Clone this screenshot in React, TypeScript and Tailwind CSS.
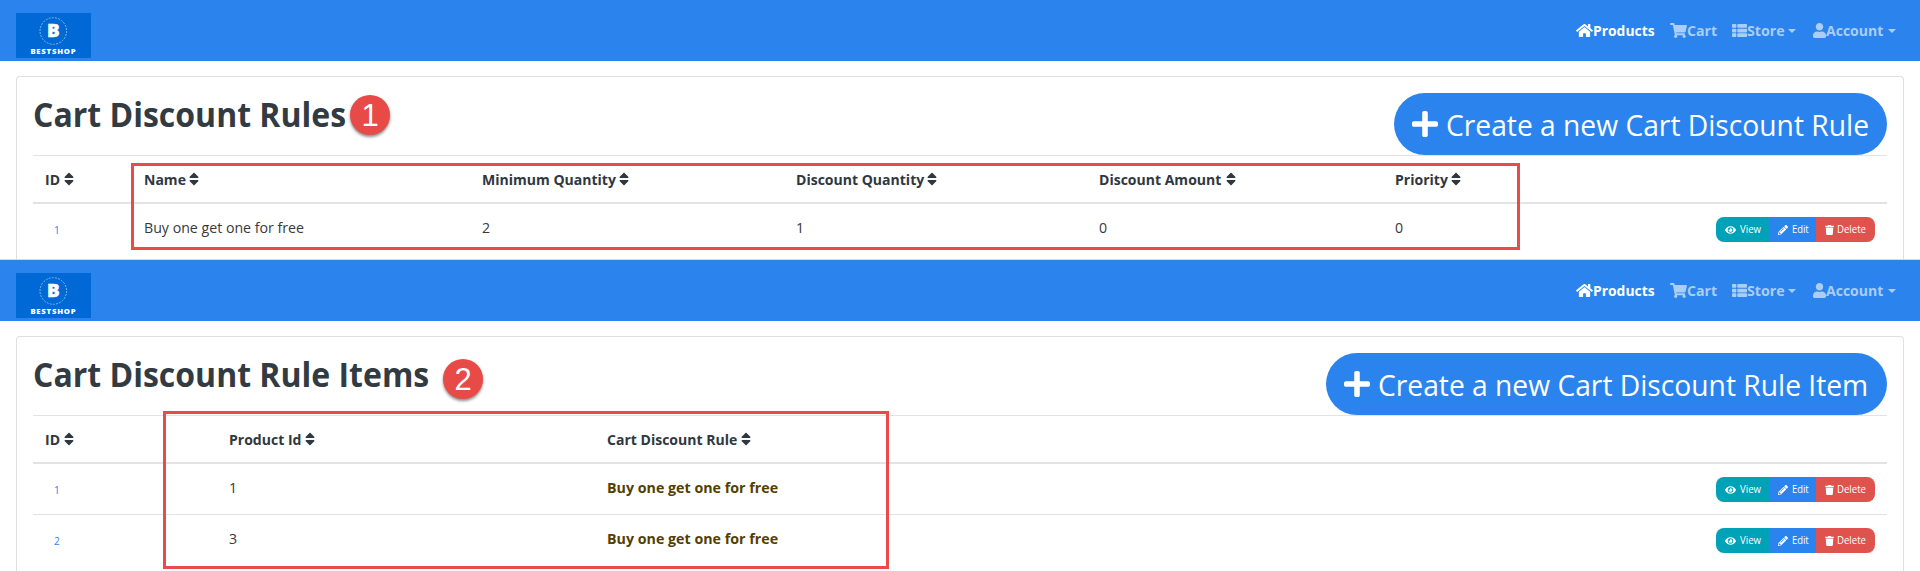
import type { ReactNode } from "react";
import { FaEye, FaHome, FaPencilAlt, FaPlus, FaShoppingCart, FaSort, FaThList, FaTrash, FaUser } from "react-icons/fa";

function Logo() {
  return (
    <svg className="block h-[45px] w-[75px] shrink-0" viewBox="0 0 75 45">
      <rect width="75" height="45" fill="#0069d5" />
      <circle cx="37.3" cy="18" r="13.3" fill="none" stroke="#7fb6ec" strokeWidth="1" strokeDasharray="2 1.2" />
      <text x="37.3" y="24.4" textAnchor="middle" textLength="12.6" lengthAdjust="spacingAndGlyphs" fontFamily="Open Sans, sans-serif" fontWeight="800" fontSize="18" fill="#fff" stroke="#fff" strokeWidth="0.5">B</text>
      <text x="14.4" y="41" textLength="46" lengthAdjust="spacingAndGlyphs" fontFamily="Open Sans, sans-serif" fontWeight="800" fontSize="7.2" letterSpacing="0.7" fill="#fff">BESTSHOP</text>
    </svg>
  );
}

function Caret() {
  return <span className="ml-[4px] mt-[1px] h-0 w-0 border-x-[4.5px] border-t-[4.5px] border-x-transparent border-t-current" />;
}

function Navbar() {
  return (
    <nav className="flex h-[61px] items-start bg-[#2b84ed] pl-4 pt-[13px] text-[15px] font-bold leading-[22px] text-[#aacef8]">
      <Logo />
      <div className="ml-auto flex pt-[6px]">
        <a className="flex w-[94px] items-center text-white">
          <FaHome className="h-[15px] w-[17px] shrink-0" />
          <span className="origin-left scale-x-[0.925] whitespace-nowrap">Products</span>
        </a>
        <a className="flex w-[62px] items-center">
          <FaShoppingCart className="h-[15px] w-[17px] shrink-0" />
          <span className="origin-left scale-x-[0.94] whitespace-nowrap">Cart</span>
        </a>
        <a className="flex w-[81px] items-center">
          <FaThList className="h-[15px] w-[15px] shrink-0" />
          <span className="w-[37px] origin-left scale-x-[0.95] whitespace-nowrap">Store</span>
          <Caret />
        </a>
        <a className="flex w-[107px] items-center">
          <FaUser className="h-[15px] w-[13px] shrink-0" />
          <span className="w-[58px] origin-left scale-x-[0.935] whitespace-nowrap">Account</span>
          <Caret />
        </a>
      </div>
    </nav>
  );
}

function HeaderCell({ label, width }: { label: string; width: string }) {
  return (
    <div className="flex items-center text-[15px] font-bold text-[#2f383f]">
      <span className={`origin-left scale-x-[0.935] whitespace-nowrap ${width}`}>{label}</span>
      <FaSort className="h-[16px] w-[10px] shrink-0" />
    </div>
  );
}

function Cell({ children }: { children: ReactNode }) {
  return <div className="-mt-[4px] origin-left scale-x-[0.945] text-[15px] text-[#373a3c]">{children}</div>;
}

function RowId({ children }: { children: ReactNode }) {
  return <div className="pl-[9px] pt-[2px] text-[10px] text-[#2b84ed]">{children}</div>;
}

function Actions() {
  return (
    <div className="mt-px flex h-[25px] w-[159px] overflow-hidden rounded-[8px] text-[10px] text-white">
      <button className="flex w-[53px] items-center bg-[#00a2b8] pl-[9px]">
        <FaEye className="mr-[4px] h-[10px] w-[11px] shrink-0" />
        <span className="origin-left scale-x-[0.96]">View</span>
      </button>
      <button className="flex w-[47px] items-center bg-[#2b84ed] pl-[9px]">
        <FaPencilAlt className="mr-[4px] h-[10px] w-[10px] shrink-0" />
        <span className="origin-left scale-x-[0.94]">Edit</span>
      </button>
      <button className="flex w-[59px] items-center bg-[#df524d] pl-[9px]">
        <FaTrash className="mr-[3px] h-[10px] w-[9px] shrink-0" />
        <span className="origin-left scale-x-[0.96]">Delete</span>
      </button>
    </div>
  );
}

function Badge({ n, place }: { n: string; place: string }) {
  return (
    <span className={`absolute flex h-10 w-10 items-center justify-center rounded-full bg-[#e84a48] font-['Liberation_Sans',sans-serif] text-[31px] leading-none text-white shadow-[0_2px_3px_rgba(0,0,0,0.45)] ${place}`}>
      {n}
    </span>
  );
}

function Panel({ title, action, actionWidth, children }: { title: string; action: string; actionWidth: string; children: ReactNode }) {
  return (
    <div className="mx-4 mt-[15px] h-[250px] rounded-t-[4px] border border-b-0 border-[#dfdfdf] px-4 pt-4">
      <div className="flex h-[62px] justify-between">
        <h1 className="origin-left scale-x-[0.95] whitespace-nowrap text-[33.7px] font-bold leading-[42px] text-[#323b42]">{title}</h1>
        <button className={`flex h-[62px] items-center rounded-[31px] bg-[#2b84ed] pl-[18px] text-[28.5px] text-white ${actionWidth}`}>
          <FaPlus className="mr-[8px] h-[30px] w-[26px] shrink-0" />
          <span className="origin-left scale-x-[0.99] whitespace-nowrap pt-[2px]">{action}</span>
        </button>
      </div>
      {children}
    </div>
  );
}

const ruleGrid = "grid grid-cols-[99px_338px_314px_303px_296px_321px_159px] items-center pl-3";
const itemGrid = "grid grid-cols-[184px_378px_1109px_159px] items-center pl-3";

export default function App() {
  return (
    <main className="h-[571px] overflow-hidden bg-white font-['Open_Sans',sans-serif]">
      <section className="relative h-[260px] overflow-hidden border-b border-[#d9d9d9]">
        <Navbar />
        <Panel title="Cart Discount Rules" action="Create a new Cart Discount Rule" actionWidth="w-[493px]">
          <div className={`h-[49px] border-b-2 border-t border-[#e2e3e4] ${ruleGrid}`}>
            <HeaderCell label="ID" width="w-[19px]" />
            <HeaderCell label="Name" width="w-[45px]" />
            <HeaderCell label="Minimum Quantity" width="w-[137px]" />
            <HeaderCell label="Discount Quantity" width="w-[131px]" />
            <HeaderCell label="Discount Amount" width="w-[127px]" />
            <HeaderCell label="Priority" width="w-[56px]" />
          </div>
          <div className={`h-[50px] ${ruleGrid}`}>
            <RowId>1</RowId>
            <Cell>Buy one get one for free</Cell>
            <Cell>2</Cell>
            <Cell>1</Cell>
            <Cell>0</Cell>
            <Cell>0</Cell>
            <Actions />
          </div>
        </Panel>
        <Badge n="1" place="left-[350px] top-[95px]" />
        <div className="absolute left-[131px] top-[163px] h-[87px] w-[1389px] border-[3px] border-[#ea4b48]" />
      </section>
      <section className="relative h-[311px] overflow-hidden">
        <Navbar />
        <Panel title="Cart Discount Rule Items" action="Create a new Cart Discount Rule Item" actionWidth="w-[561px]">
          <div className={`h-[49px] border-b-2 border-t border-[#e2e3e4] ${itemGrid}`}>
            <HeaderCell label="ID" width="w-[19px]" />
            <HeaderCell label="Product Id" width="w-[76px]" />
            <HeaderCell label="Cart Discount Rule" width="w-[134px]" />
          </div>
          {[["1", "1"], ["2", "3"]].map(([id, product], i) => (
            <div key={id} className={`${i ? "h-[51px] border-t border-[#e2e3e4]" : "h-[50px]"} ${itemGrid}`}>
              <RowId>{id}</RowId>
              <Cell>{product}</Cell>
              <div className="-mt-[4px] origin-left scale-x-[0.95] text-[15px] font-bold text-[#533f03]">Buy one get one for free</div>
              <Actions />
            </div>
          ))}
        </Panel>
        <Badge n="2" place="left-[443px] top-[99px]" />
        <div className="absolute left-[163px] top-[151px] h-[158px] w-[726px] border-[3px] border-[#ea4b48]" />
      </section>
    </main>
  );
}
